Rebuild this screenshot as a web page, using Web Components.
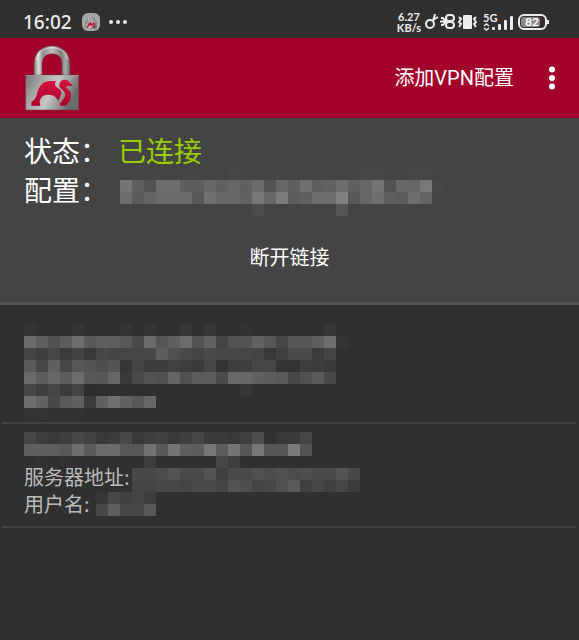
<!DOCTYPE html>
<html lang="zh-CN">
<head>
<meta charset="utf-8">
<meta name="viewport" content="width=device-width, initial-scale=1">
<title>VPN</title>
<style>
html,body{margin:0;min-height:100%;background:#303030}
body{font-family:"Noto Sans","Noto Sans CJK SC",sans-serif;color:#fff}
</style>
</head>
<body>
<vpn-app></vpn-app>
<script>
const define = (name, html, setup) => customElements.define(name, class extends HTMLElement {
  constructor() {
    super();
    this.attachShadow({mode: 'open'}).innerHTML = html;
  }
  connectedCallback() { if (setup) setup(this, this.shadowRoot); }
});

/* Redacted value: rows separated by "/", each cell a two-digit grey, ".." is empty */
define('redacted-block', `<style>
:host{display:block;flex:none}
svg{display:block;overflow:visible}
</style><svg aria-hidden="true" shape-rendering="crispEdges"></svg>`, (host, root) => {
  const rows = host.getAttribute('cells').split('/').map(r => r.trim().split(/\s+/));
  const svg = root.querySelector('svg');
  svg.setAttribute('width', Math.max(...rows.map(r => r.length)) * 12);
  svg.setAttribute('height', rows.length * 12);
  svg.innerHTML = rows.map((row, y) => row.map((c, x) => c === '..' ? '' :
    `<rect x="${x * 12}" y="${y * 12}" width="12" height="12" fill="#${c}${c}${c}"/>`).join('')).join('');
});

define('lock-logo', `<style>
:host{display:block;flex:none}
svg{display:block;width:100%;height:100%}
</style>
<svg viewBox="72 24 168 201" aria-hidden="true">
<defs>
<linearGradient id="b" x1="0" y1="0" x2="1" y2="0.35"><stop offset="0" stop-color="#777"/><stop offset=".3" stop-color="#a5a5a5"/><stop offset=".58" stop-color="#c6c6c6"/><stop offset=".8" stop-color="#999"/><stop offset="1" stop-color="#6b6b6b"/></linearGradient>
<linearGradient id="s" x1="0" y1="0" x2="1" y2="0"><stop offset="0" stop-color="#777"/><stop offset=".12" stop-color="#ddd"/><stop offset=".25" stop-color="#8a8a8a"/><stop offset=".5" stop-color="#c4c4c4"/><stop offset=".76" stop-color="#777"/><stop offset=".88" stop-color="#aaa"/><stop offset="1" stop-color="#666"/></linearGradient>
<linearGradient id="r" x1="0" y1="0" x2="0" y2="1"><stop offset="0" stop-color="#d4133f"/><stop offset="1" stop-color="#a9052d"/></linearGradient>
</defs>
<path fill="url(#s)" stroke="#6d4046" stroke-width="1.5" d="M102 116V82C102 49 124 27 156 27S210 49 210 82V116H186V82C186 62 174 50 156 50S126 62 126 82V116Z"/>
<path fill="none" stroke="#e2e2e2" stroke-width="3" opacity=".7" d="M108 70C113 46 132 32 156 32S198 46 204 68"/>
<path fill="url(#b)" stroke="#6d4046" stroke-width="1.5" d="M77 114H236V219H77Z"/>
<path fill="none" stroke="#c9c9c9" stroke-width="2" opacity=".6" d="M79 116H234"/>
<path fill="url(#r)" d="M94 206V194C101 192 105 187 109 178C114 158 119 144 133 136C144 130 158 132 169 132C164 137 164 144 168 149C176 155 185 159 184 169C183 177 178 184 176 192C173 188 170 185 166 180C158 173 144 171 133 175C124 179 119 188 119 195L121 206Z"/>
<path fill="url(#r)" d="M180 206C178 199 183 194 189 188C197 179 198 168 190 161C183 155 177 151 178 144C179 134 186 128 195 128C203 128 207 132 209 138L218 143L217 147H205C199 147 196 150 201 154C210 160 214 168 213 178C212 193 203 202 195 206Z"/>
</svg>`);

define('status-bar', `<style>
:host{display:flex;height:38px;align-items:center;justify-content:space-between;padding:6px 29px 0 23px;box-sizing:border-box;color:#ececec;background:#303030}
.group{display:flex;align-items:center}
svg{display:block;flex:none;fill:none;stroke:#ececec;stroke-width:2}
time{font:500 19px/22px "Noto Sans",sans-serif}
.app{width:18px;height:18px;border-radius:6px;background:#a5a5a5;margin:0 8px 0 10px;display:grid;place-items:center}
.app lock-logo{width:12px;height:14px}
.speed{display:grid;width:28px;margin-right:2px;text-align:center;font:700 11px/11px Lato,"Noto Sans",sans-serif}
.net{font:700 11px/10px Lato,"Noto Sans",sans-serif;width:31px;margin-left:4px;display:grid}
.net>*,.battery>*{grid-area:1/1}
.battery{width:32px;margin-left:4px;display:grid;align-items:center;color:#fff;font:700 12px/14px Lato,"Noto Sans",sans-serif}
.battery span{padding-left:7px}
</style>
<div class="group"><time>16:02</time><span class="app"><lock-logo></lock-logo></span>
<svg width="20" height="6" viewBox="0 0 20 6"><g fill="#ececec" stroke="none"><circle cx="3" cy="3" r="2"/><circle cx="10" cy="3" r="2"/><circle cx="17" cy="3" r="2"/></g></svg></div>
<div class="group"><div class="speed"><span>6.27</span><span>KB/s</span></div>
<svg width="14" height="18" viewBox="0 0 14 18"><circle cx="5" cy="11" r="4"/><path d="M8 8L10 1M8 7L13 4"/></svg>
<svg width="18" height="18" viewBox="0 0 18 18"><rect x="7" y="2" width="8" height="6" rx="3"/><rect x="7" y="9" width="8" height="6" rx="3"/><path d="M2 5H4L7 8.5L4 12H2M1 8.5H8"/></svg>
<svg width="22" height="18" viewBox="0 0 22 18"><rect x="6" y="2" width="9" height="14" rx="1" fill="#ececec" stroke="none"/><path d="M2 4L4 6L2 9L4 11L2 14M19 4L17 6L19 9L17 11L19 14"/></svg>
<span class="net"><span>5G</span><svg width="31" height="19" viewBox="0 0 31 19"><g fill="#ececec" stroke="none"><rect x="9" y="14" width="3" height="3" rx="1"/><rect x="15" y="11" width="3" height="6" rx="1"/><rect x="21" y="7" width="3" height="10" rx="1"/><rect x="27" y="3" width="3" height="14" rx="1"/></g><path stroke-width="1.5" d="M1 13L3.5 11L6 13M1 15L3.5 17L6 15"/></svg></span>
<span class="battery"><svg width="32" height="16" viewBox="0 0 32 16"><rect x="1" y="1" width="27" height="14" rx="5"/><rect x="3" y="3" width="19" height="10" rx="3" fill="#888" stroke="none"/><path d="M30 6V10"/></svg><span>82</span></span></div>`);

define('app-toolbar', `<style>
:host{display:flex;height:80px;align-items:center;background:#a3022a;padding:0 15px 0 24px;box-sizing:border-box}
lock-logo{width:56px;height:67px;margin-right:auto}
button{border:0;background:none;color:#fff;padding:0;font:400 20px/28px Roboto,"Noto Sans CJK SC",sans-serif;cursor:pointer}
.more{width:24px;height:40px;margin-left:26px;display:grid;place-items:center}
svg{display:block}
</style>
<lock-logo></lock-logo><button>添加VPN配置</button>
<button class="more" aria-label="更多选项"><svg width="8" height="24" viewBox="0 0 8 24" fill="#fff"><circle cx="4" cy="3.5" r="3"/><circle cx="4" cy="12" r="3"/><circle cx="4" cy="20.5" r="3"/></svg></button>`);

define('connection-status', `<style>
:host{display:block;background:#444;border-bottom:3px solid #555;padding:13px 24px 20px;font:400 28px/39px "Noto Sans CJK SC",sans-serif}
dl{margin:0;display:grid;grid-template-columns:94px 1fr}
dt,dd{margin:0;white-space:nowrap}
.on{color:#99cc00}
.value{padding:0 0 0 2px;height:39px;box-sizing:border-box}
redacted-block{margin-top:-2px}
button{display:block;margin:23px auto 0;padding:0 20px;height:50px;border:0;background:none;color:#fff;font:400 20px/28px "Noto Sans CJK SC",sans-serif;cursor:pointer}
</style>
<dl><dt>状态：</dt><dd class="on">已连接</dd><dt>配置：</dt><dd class="value">
<redacted-block cells=".. .. .. .. .. .. .. .. .. 46 .. .. .. .. .. .. .. .. .. .. 48 47 .. .. 47 46/
75 5f 53 6d 6d 5d 5c 66 60 66 60 6a 54 66 5f 70 5f 62 6d 60 66 75 52 66 66 78 47/
6d 5a 64 6a 6a 6a 58 70 66 66 62 76 66 7c 5c 60 6d 6d 80 58 65 6e 5f 5c 6e 64/
.. .. .. .. .. .. .. .. .. .. .. 4b .. .. .. .. .. .. 56"></redacted-block></dd></dl>
<button>断开链接</button>`);

define('profile-item', `<style>
:host{display:block;margin:0 3px 0 2px;padding:0 22px;box-sizing:border-box;border-bottom:2px solid #434343;color:#bababa;font:400 20px/27px "Noto Sans CJK SC",sans-serif}
</style><slot></slot>`);

define('profile-row', `<style>
:host{display:flex;height:27px;align-items:flex-start}
:host([low]){align-items:flex-end}
::slotted(span){align-self:flex-start;line-height:23px;white-space:nowrap}
</style><slot></slot>`);

define('vpn-app', `<style>
:host{display:block}
.first{padding-top:19px;padding-bottom:2px}
.second{padding-top:8px;padding-bottom:7px}
.title{height:33px}
.address{margin-left:2px}
.user{margin-left:6px}
</style>
<status-bar></status-bar><app-toolbar></app-toolbar><connection-status></connection-status>
<main>
<profile-item class="first"><redacted-block cells="34 .. .. .. 35 .. .. .. 35 .. 35 .. .. 36 .. 36 .. .. 32 .. .. .. .. .. .. 36/
6b 5e 50 5c 6e 58 5e 5e 58 4a 6a 56 60 6c 52 62 44 52 54 62 58 46 56 56 5e 6e 34/
44 3e 46 3b 42 38 48 44 46 46 48 5c 50 4a 44 4a 46 46 46 44 38 40 4a 4a 3c 44/
5a 46 60 46 58 54 4e 54 36 44 3c 3c 42 3e 3a 46 34 3e 3e 46 46 34 34 3e 3c 3a/
6a 5c 66 5c 6c 58 56 66 38 4a 52 50 64 50 5c 5c 4a 68 66 60 5c 5a 48 50 5a 48/
46 3e 46 3b 44 2e 2f 2f 2f 2f 2f 2f 2f .. .. .. .. .. 36/
6e 62 48 5a 60 3c 60 70 62 58 66/
33 34 32 32 32"></redacted-block></profile-item>
<profile-item class="second"><redacted-block class="title" cells="48 3e 38 3e 48 42 38 3c 48 38 3e 40 38 3e 46 3a 3a 38 40 4e 32 38 3a 46/
60 60 5e 58 6e 5a 6a 6a 58 58 72 58 74 5e 5c 76 5c 74 56 76 56 56 7a 54/
.. 32 .. 32 .. .. .. .. .. .. 3e .. .. .. .. .. 46 3e"></redacted-block>
<profile-row low><span>服务器地址:</span><redacted-block class="address" cells="48 48 4c 54 4a 4a 54 40 4a 4a 50 4c 50 4c 4e 4a 4a 54 48/
44 44 48 46 44 4a 4a 44 54 4e 44 48 50 5a 40 46 40 46 3c"></redacted-block></profile-row>
<profile-row><span>用户名:</span><redacted-block class="user" cells="36 48 40 44 3e/48 5e 46 46 58"></redacted-block></profile-row>
</profile-item>
</main>`);
</script>
</body>
</html>
